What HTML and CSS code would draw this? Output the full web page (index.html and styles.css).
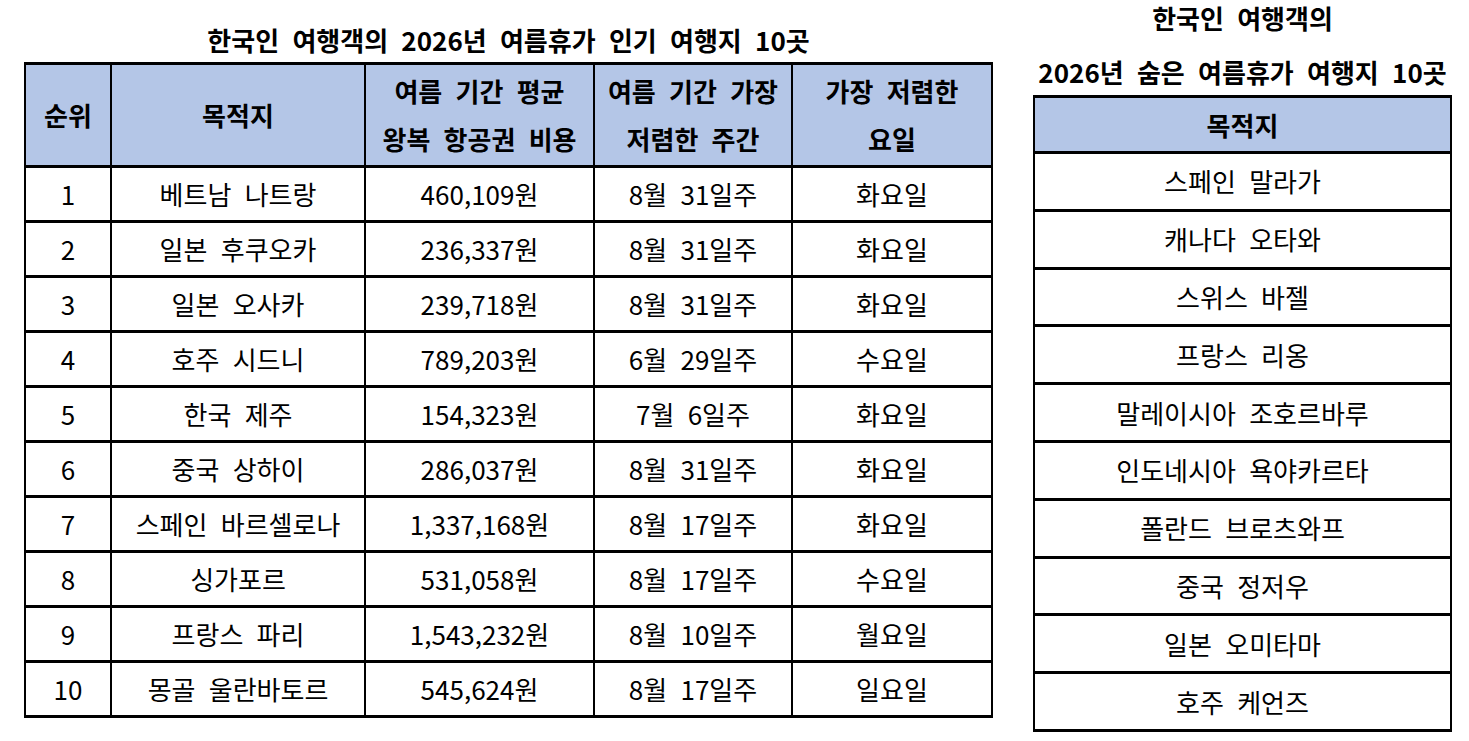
FILE: index.html
```html
<!DOCTYPE html>
<html lang="ko">
<head>
<meta charset="utf-8">
<title>2026년 여름휴가 여행지</title>
<link rel="stylesheet" href="styles.css">
</head>
<body>
<main class="page">
  <section class="block block-main">
    <h2 class="title title-main">한국인 여행객의 2026년 여름휴가 인기 여행지 10곳</h2>
    <table class="grid grid-main">
      <colgroup>
        <col class="c-rank"><col class="c-dest"><col class="c-cost"><col class="c-week"><col class="c-day">
      </colgroup>
      <thead>
        <tr class="head-row">
          <th>순위</th>
          <th>목적지</th>
          <th>여름 기간 평균<br>왕복 항공권 비용</th>
          <th>여름 기간 가장<br>저렴한 주간</th>
          <th>가장 저렴한<br>요일</th>
        </tr>
      </thead>
      <tbody>
        <tr><td>1</td><td>베트남 나트랑</td><td>460,109원</td><td>8월 31일주</td><td>화요일</td></tr>
        <tr><td>2</td><td>일본 후쿠오카</td><td>236,337원</td><td>8월 31일주</td><td>화요일</td></tr>
        <tr><td>3</td><td>일본 오사카</td><td>239,718원</td><td>8월 31일주</td><td>화요일</td></tr>
        <tr><td>4</td><td>호주 시드니</td><td>789,203원</td><td>6월 29일주</td><td>수요일</td></tr>
        <tr><td>5</td><td>한국 제주</td><td>154,323원</td><td>7월 6일주</td><td>화요일</td></tr>
        <tr><td>6</td><td>중국 상하이</td><td>286,037원</td><td>8월 31일주</td><td>화요일</td></tr>
        <tr><td>7</td><td>스페인 바르셀로나</td><td>1,337,168원</td><td>8월 17일주</td><td>화요일</td></tr>
        <tr><td>8</td><td>싱가포르</td><td>531,058원</td><td>8월 17일주</td><td>수요일</td></tr>
        <tr><td>9</td><td>프랑스 파리</td><td>1,543,232원</td><td>8월 10일주</td><td>월요일</td></tr>
        <tr><td>10</td><td>몽골 울란바토르</td><td>545,624원</td><td>8월 17일주</td><td>일요일</td></tr>
      </tbody>
    </table>
  </section>
  <section class="block block-side">
    <h2 class="title title-side"><span class="t-line">한국인 여행객의</span><span class="t-line">2026년 숨은 여름휴가 여행지 10곳</span></h2>
    <table class="grid grid-side">
      <thead>
        <tr class="head-row"><th>목적지</th></tr>
      </thead>
      <tbody>
        <tr><td>스페인 말라가</td></tr>
        <tr><td>캐나다 오타와</td></tr>
        <tr><td>스위스 바젤</td></tr>
        <tr><td>프랑스 리옹</td></tr>
        <tr><td>말레이시아 조호르바루</td></tr>
        <tr><td>인도네시아 욕야카르타</td></tr>
        <tr><td>폴란드 브로츠와프</td></tr>
        <tr><td>중국 정저우</td></tr>
        <tr><td>일본 오미타마</td></tr>
        <tr><td>호주 케언즈</td></tr>
      </tbody>
    </table>
  </section>
</main>
</body>
</html>
```
FILE: styles.css
```css
* { box-sizing: border-box; }
html, body { margin: 0; padding: 0; background: #ffffff; }
body {
  font-family: "Noto Sans CJK KR", "Noto Sans", "Liberation Sans", sans-serif;
  color: #000000;
  font-size: 26px;
  word-spacing: 6px;
}
.page {
  display: flex;
  align-items: flex-start;
  padding-left: 25px;
  gap: 41px;
}
.block { display: flex; flex-direction: column; align-items: center; }
.block-main { width: 967px; }
.block-side { width: 419px; }
.title {
  margin: 0;
  font-size: 26px;
  font-weight: 700;
  text-align: center;
  white-space: nowrap;
}
.title-main { line-height: 36px; padding-top: 22px; margin-bottom: 4px; }
.title-side { display: flex; flex-direction: column; gap: 18px; margin-bottom: 5px; }
.t-line { display: block; line-height: 36px; }
.grid {
  border-collapse: collapse;
  width: 100%;
  table-layout: fixed;
}
.grid th, .grid td {
  border-left: 2px solid #000;
  border-right: 2px solid #000;
  border-top: 3px solid #000;
  border-bottom: 3px solid #000;
  text-align: center;
  vertical-align: middle;
  padding: 0;
}
.grid th {
  background: #b4c6e7;
  font-weight: 700;
  line-height: 48px;
}
.grid td { font-weight: 400; line-height: 30px; }
.c-rank { width: 86px; }
.c-dest { width: 254px; }
.c-cost { width: 229px; }
.c-week { width: 198px; }
.c-day { width: 200px; }
.grid-main .head-row { height: 103px; }
.grid-main tbody tr { height: 55px; }
.grid-side .head-row { height: 56px; }
.grid-side th { line-height: 30px; }
.grid-side tbody tr { height: 57.8px; }
```
